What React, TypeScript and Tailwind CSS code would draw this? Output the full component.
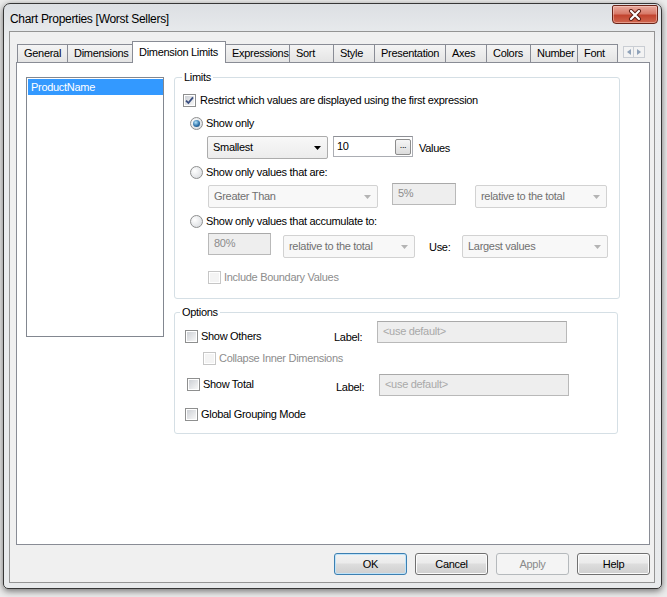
import React from "react";

type BoxProps = { checked?: boolean; disabled?: boolean };

function CheckBox({ checked, disabled }: BoxProps) {
  return (
    <span
      className={[
        "flex h-[13px] w-[13px] shrink-0 border bg-white p-px",
        disabled ? "border-[#c6c6c6]" : "border-[#8e8f8f]",
      ].join(" ")}
    >
      <span
        className={[
          "flex h-full w-full items-center justify-center",
          disabled ? "bg-[#f4f4f4]" : "bg-[linear-gradient(135deg,#cdd0d5,#f7f7f7)]",
        ].join(" ")}
      >
        {checked && (
          <svg width="9" height="9" viewBox="0 0 9 9">
            <path d="M1 4.6 L3.4 7 L8 1.4" fill="none" stroke="#3b4f80" strokeWidth="1.8" />
          </svg>
        )}
      </span>
    </span>
  );
}

function Radio({ checked }: BoxProps) {
  return (
    <span className="flex h-[13px] w-[13px] shrink-0 items-center justify-center rounded-full border border-[#8e8f8f] bg-[radial-gradient(circle_at_35%_35%,#ffffff,#d3d6da)]">
      {checked && (
        <span className="h-[7px] w-[7px] rounded-full bg-[radial-gradient(circle_at_40%_35%,#b2e3fb,#2f73ab_55%,#163f69)]" />
      )}
    </span>
  );
}

function Arrow({ color }: { color: string }) {
  return (
    <svg width="7" height="4" viewBox="0 0 7 4">
      <path d="M0 0 H7 L3.5 4 Z" fill={color} />
    </svg>
  );
}

function Combo({ text, className, disabled }: { text: string; className: string; disabled?: boolean }) {
  return (
    <div
      className={[
        "flex h-[23px] shrink-0 items-center justify-between rounded-[2px] border pl-[5px] pr-[6px]",
        disabled
          ? "border-[#d2d2d2] bg-[#f8f8f8] text-[#707070]"
          : "border-[#acacac] bg-[linear-gradient(#f8f8f8,#ececec)] text-black",
        className,
      ].join(" ")}
    >
      <span>{text}</span>
      <Arrow color={disabled ? "#b4b4b4" : "#000000"} />
    </div>
  );
}

function DisabledBox({ text, className }: { text: string; className: string }) {
  return (
    <div
      className={[
        "h-[22px] shrink-0 border border-[#b9b9b9] border-t-[#a9a9a9] bg-[#eeeeee] pl-[5px] pt-[2px] leading-[14px] text-[#8c8c8c]",
        className,
      ].join(" ")}
    >
      {text}
    </div>
  );
}

function Button({ label, kind }: { label: string; kind?: "default" | "disabled" }) {
  return (
    <div
      className={[
        "flex h-[22px] w-[73px] items-center justify-center rounded-[3px] border",
        kind === "disabled"
          ? "border-[#b5b9bc] bg-[#f4f4f4] text-[#8a8a8a]"
          : kind === "default"
            ? "border-[#3c7fb1] bg-[linear-gradient(#f2f2f2,#ebebeb_45%,#dddddd_50%,#cfcfcf)] shadow-[inset_0_0_0_1px_#bfe3f9]"
            : "border-[#707070] bg-[linear-gradient(#f2f2f2,#ebebeb_45%,#dddddd_50%,#cfcfcf)] shadow-[inset_0_0_0_1px_#fcfcfc]",
      ].join(" ")}
    >
      {label}
    </div>
  );
}

function CloseButton() {
  return (
    <div className="mr-[3px] mt-px flex h-[19px] w-[46px] items-center justify-center rounded-b-[4px] rounded-t-[2px] border border-[#6a2418] bg-[linear-gradient(#e9aa9e,#d87a69_45%,#c2442f_55%,#d0674f)] shadow-[inset_0_0_0_1px_rgba(255,220,210,0.45)]">
      <svg width="14" height="12" viewBox="0 0 14 12">
        <path d="M3 2 L11 10 M11 2 L3 10" stroke="#5a1a10" strokeWidth="4" strokeLinecap="round" />
        <path d="M3 2 L11 10 M11 2 L3 10" stroke="#ffffff" strokeWidth="2.2" strokeLinecap="round" />
      </svg>
    </div>
  );
}

const tabs = [
  { label: "General", w: "w-[51px]" },
  { label: "Dimensions", w: "w-[66px]" },
  { label: "Dimension Limits", w: "w-[94px]", active: true },
  { label: "Expressions", w: "w-[65px]" },
  { label: "Sort", w: "w-[45px]" },
  { label: "Style", w: "w-[42px]" },
  { label: "Presentation", w: "w-[72px]" },
  { label: "Axes", w: "w-[42px]" },
  { label: "Colors", w: "w-[45px]" },
  { label: "Number", w: "w-[48px]" },
  { label: "Font", w: "w-[41px]" },
];

export default function App() {
  return (
    <div className="h-[597px] w-[667px] overflow-hidden bg-[#ececec] pl-[3px] pt-[3px] font-['Liberation_Sans',Arial,sans-serif] text-[11px] tracking-[-0.3px] text-black">
      <div className="flex h-[586px] w-[659px] flex-col rounded-b-[5px] rounded-t-[7px] border border-[#363636] bg-[linear-gradient(180deg,#dcdfe3,#eceef0_40px,#e8eaec)] shadow-[0_2px_7px_rgba(0,0,0,0.55)]">
        <div className="flex h-[27px] shrink-0 items-start">
          <div className="flex-1 pl-[6px] pt-[8px] text-[12px] leading-[15px]">Chart Properties [Worst Sellers]</div>
          <CloseButton />
        </div>

        <div className="ml-[5px] flex h-[552px] w-[646px] flex-col border border-[#949494] bg-[#f0f0f0] pl-[6px] pt-[9px]">
          {/* tab strip */}
          <div className="flex h-[21px] items-end pl-px">
            {tabs.map((t, i) =>
              t.active ? (
                <div
                  key={t.label}
                  className={`relative z-10 -mb-px flex h-[22px] items-center border border-b-0 border-[#898c95] bg-white pl-[6px] ${t.w} ${i > 0 ? "-ml-px" : ""}`}
                >
                  {t.label}
                </div>
              ) : (
                <div
                  key={t.label}
                  className={`flex h-[18px] items-center border border-b-0 border-[#898c95] bg-[linear-gradient(#f4f4f4,#e4e4e4)] pl-[6px] ${t.w} ${i > 0 ? "-ml-px" : ""}`}
                >
                  {t.label}
                </div>
              ),
            )}
            <div className="mb-[4px] ml-[5px] flex">
              <div className="flex h-[12px] w-[11px] items-center justify-center border border-[#c9cdd3] bg-[#f3f3f3]">
                <svg width="4" height="6" viewBox="0 0 4 6">
                  <path d="M4 0 V6 L0 3 Z" fill="#8fa2b9" />
                </svg>
              </div>
              <div className="flex h-[12px] w-[11px] items-center justify-center border border-l-0 border-[#c9cdd3] bg-[#f3f3f3]">
                <svg width="4" height="6" viewBox="0 0 4 6">
                  <path d="M0 0 V6 L4 3 Z" fill="#8fa2b9" />
                </svg>
              </div>
            </div>
          </div>

          {/* tab page */}
          <div className="flex h-[483px] w-[634px] border border-[#898c95] bg-white pl-[9px] pt-[14px]">
            <div className="h-[260px] w-[138px] shrink-0 border border-[#828790] bg-white p-px">
              <div className="h-[16px] w-[135px] bg-[#3399ff] pl-[3px] leading-[16px] text-white">ProductName</div>
            </div>

            <div className="ml-[10px] flex flex-col">
              {/* Limits */}
              <div className="relative h-[222px] w-[446px] rounded-[3px] border border-[#d5dfe5]">
                <span className="absolute left-[7px] top-[-8px] bg-white px-[2px] leading-[14px]">Limits</span>
                <div className="flex flex-col">
                  <div className="mt-[14px] flex h-[16px] items-center pl-[8px]">
                    <CheckBox checked />
                    <span className="ml-[4px]">Restrict which values are displayed using the first expression</span>
                  </div>
                  <div className="mt-[7px] flex h-[16px] items-center pl-[15px]">
                    <Radio checked />
                    <span className="ml-[3px]">Show only</span>
                  </div>
                  <div className="mt-[5px] flex h-[22px] items-start pl-[32px]">
                    <Combo text="Smallest" className="w-[121px]" />
                    <div className="ml-[5px] flex h-[21px] w-[80px] items-center justify-between border border-[#abadb3] border-t-[#8e9096] bg-white pl-[3px] pr-px">
                      <span>10</span>
                      <div className="flex h-[16px] w-[16px] items-center justify-center rounded-[2px] border border-[#8c8c8c] bg-[linear-gradient(#f6f6f6,#dcdcdc)] pb-[3px] text-[9px] leading-none">
                        ...
                      </div>
                    </div>
                    <span className="ml-[6px] mt-[4px] leading-[16px]">Values</span>
                  </div>
                  <div className="mt-[6px] flex h-[16px] items-center pl-[15px]">
                    <Radio />
                    <span className="ml-[3px]">Show only values that are:</span>
                  </div>
                  <div className="mt-[3px] flex h-[25px] items-start pl-[33px]">
                    <Combo text="Greater Than" className="mt-[2px] w-[170px]" disabled />
                    <DisabledBox text="5%" className="ml-[14px] w-[64px]" />
                    <Combo text="relative to the total" className="ml-[19px] mt-[2px] w-[132px]" disabled />
                  </div>
                  <div className="mt-[5px] flex h-[16px] items-center pl-[15px]">
                    <Radio />
                    <span className="ml-[3px]">Show only values that accumulate to:</span>
                  </div>
                  <div className="mt-[4px] flex h-[25px] items-start pl-[33px]">
                    <DisabledBox text="80%" className="w-[63px]" />
                    <Combo text="relative to the total" className="ml-[12px] mt-[2px] w-[132px]" disabled />
                    <span className="ml-[14px] mt-[6px] w-[33px] leading-[16px]">Use:</span>
                    <Combo text="Largest values" className="mt-[2px] w-[146px]" disabled />
                  </div>
                  <div className="mt-[11px] flex h-[16px] items-center pl-[33px]">
                    <CheckBox disabled />
                    <span className="ml-[3px] text-[#8d8d8d]">Include Boundary Values</span>
                  </div>
                </div>
              </div>

              {/* Options */}
              <div className="relative mt-[13px] h-[122px] w-[444px] rounded-[3px] border border-[#d5dfe5]">
                <span className="absolute left-[5px] top-[-8px] bg-white px-[2px] leading-[14px]">Options</span>
                <div className="flex flex-col">
                  <div className="mt-[8px] flex h-[23px] items-start pl-[10px]">
                    <div className="mt-[7px] flex h-[16px] w-[149px] items-center">
                      <CheckBox />
                      <span className="ml-[3px]">Show Others</span>
                    </div>
                    <span className="mt-[8px] w-[43px] leading-[16px]">Label:</span>
                    <DisabledBox text="<use default>" className="w-[190px] text-[#a9a9a9]" />
                  </div>
                  <div className="mt-[6px] flex h-[16px] items-center pl-[28px]">
                    <CheckBox disabled />
                    <span className="ml-[3px] text-[#8d8d8d]">Collapse Inner Dimensions</span>
                  </div>
                  <div className="mt-[8px] flex h-[23px] items-start pl-[12px]">
                    <div className="mt-[2px] flex h-[16px] w-[149px] items-center">
                      <CheckBox />
                      <span className="ml-[3px]">Show Total</span>
                    </div>
                    <span className="mt-[5px] w-[43px] leading-[16px]">Label:</span>
                    <DisabledBox text="<use default>" className="w-[190px] text-[#a9a9a9]" />
                  </div>
                  <div className="mt-[9px] flex h-[16px] items-center pl-[10px]">
                    <CheckBox />
                    <span className="ml-[3px]">Global Grouping Mode</span>
                  </div>
                </div>
              </div>
            </div>
          </div>

          {/* buttons */}
          <div className="mt-[8px] flex w-[634px] justify-end gap-[8px]">
            <Button label="OK" kind="default" />
            <Button label="Cancel" />
            <Button label="Apply" kind="disabled" />
            <Button label="Help" />
          </div>
        </div>
      </div>
    </div>
  );
}
